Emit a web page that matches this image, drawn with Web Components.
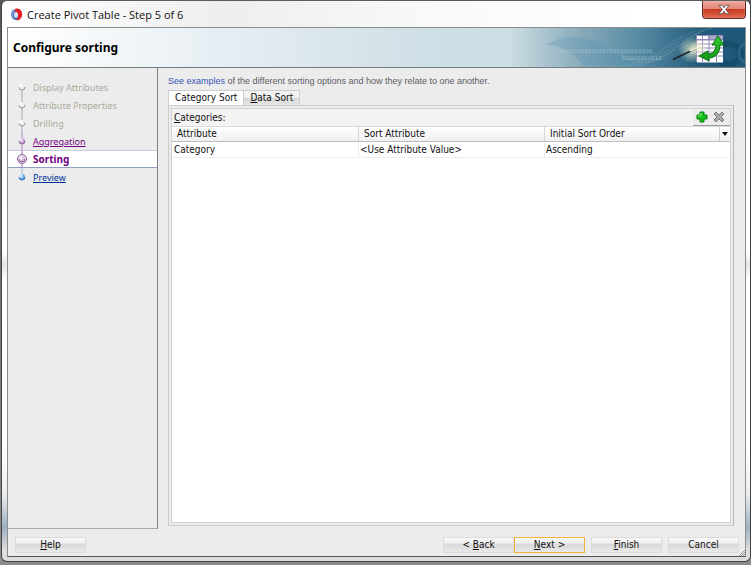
<!DOCTYPE html>
<html lang="en">
<head>
<meta charset="utf-8">
<title>Create Pivot Table - Step 5 of 6</title>
<style>
  body {
    margin: 0;
    min-height: 100vh;
    display: flex;
    background: linear-gradient(#55565a, #77787a 60%, #8c8c8c);
    font-family: "DejaVu Sans Condensed", "Noto Sans", sans-serif;
    font-size: 10px;
    color: #111;
  }
</style>
</head>
<body>

<wizard-window heading="Create Pivot Table - Step 5 of 6">
  <wizard-banner slot="banner">Configure sorting</wizard-banner>
  <wizard-steps slot="steps">
    <wizard-step state="disabled">Display Attributes</wizard-step>
    <wizard-step state="disabled">Attribute Properties</wizard-step>
    <wizard-step state="disabled">Drilling</wizard-step>
    <wizard-step state="visited">Aggregation</wizard-step>
    <wizard-step state="current">Sorting</wizard-step>
    <wizard-step state="next">Preview</wizard-step>
  </wizard-steps>
  <sort-tabs>
    <sort-table></sort-table>
  </sort-tabs>
  <wizard-button slot="help"><u>H</u>elp</wizard-button>
  <wizard-button slot="buttons"><span>&lt; <u>B</u>ack</span></wizard-button>
  <wizard-button slot="buttons" default><span><u>N</u>ext &gt;</span></wizard-button>
  <wizard-button slot="buttons" apart><u>F</u>inish</wizard-button>
  <wizard-button slot="buttons" apart>Cancel</wizard-button>
</wizard-window>

<script>
// Attach a shadow root and fill it from a string
function render(element, html) {
  const root = element.attachShadow({ mode: 'open' });
  const template = document.createElement('template');
  template.innerHTML = html;
  root.append(template.content.cloneNode(true));
  return root;
}

// The window frame: title bar, banner, steps, content and the footer buttons
class WizardWindow extends HTMLElement {
  constructor() {
    super();
    const root = render(this, `
      <style>
        :host {
          flex: 1;
          display: flex;
          flex-direction: column;
          box-sizing: border-box;
          margin: 0 0 3px 1px;
          padding: 0 4px 4px 5px;
          border: 1px solid #444;
          border-top-color: #5c5c5c;
          border-radius: 6px;
          background:
            linear-gradient(90deg, #fff0 1%, #eee 30%, #f8f8f8 55%, #fff0 85%) 0 0 / 100% 26px no-repeat,
            linear-gradient(#fff 0 45%, #e4e6e8 47%, #fff 50% 80%, #eee 88%, #9eb0c2 94%, #ddd 98%);
        }
        header {
          height: 26px;
          display: flex;
          align-items: center;
          gap: 4px;
          padding-left: 3px;
        }
        h1 {
          flex: 1;
          margin: 0;
          font: 11px "Open Sans", sans-serif;
        }
        .close {
          align-self: flex-start;
          width: 44px;
          height: 18px;
          padding: 0;
          border: 1px solid #5f2c28;
          border-top: 0;
          border-radius: 0 0 4px 4px;
          background: linear-gradient(#efaaa0, #df8475 48%, #c93a22 50%, #dd6a50);
          box-shadow: inset 0 0 1px #fff;
        }
        .close svg { display: block; margin: auto; }
        .frame {
          flex: 1;
          display: flex;
          flex-direction: column;
          border: 1px solid #8a8d8e;
          border-bottom-color: #555;
          background: #ececec;
        }
        .body { flex: 1; display: flex; }
        main {
          flex: 1;
          display: flex;
          flex-direction: column;
          padding: 6px 11px 3px 10px;
        }
        footer {
          display: flex;
          justify-content: space-between;
          padding: 8px 6px 3px 7px;
          position: relative;
        }
        .buttons { display: flex; }
        .grip { position: absolute; right: 0; bottom: 0; }
      </style>
      <header>
        <svg width="13" height="13" viewBox="0 0 13 13" aria-hidden="true">
          <ellipse cx="6" cy="7" rx="4" ry="5" fill="#2f65b5"/>
          <path d="M6 1C2 1 1 4 1 6.500C1 9 2 11 4 12C3 8 3 4 6 1Z" fill="#7a9bd0"/>
          <path d="M5 1C10-1 13 4 12 8C11 11 9 13 6 12C9 10 9 5 5 4Z" fill="#e21d25"/>
          <ellipse cx="6" cy="7" rx="2" ry="3" fill="#d8e6f8"/>
        </svg>
        <h1></h1>
        <button class="close" aria-label="Close">
          <svg width="12" height="11" viewBox="0 0 14 12">
            <path d="M1 1H5L7 4L9 1H13L9 6L13 11H9L7 8L5 11H1L5 6Z" fill="#fff" stroke="#60484a"/>
          </svg>
        </button>
      </header>
      <div class="frame">
        <slot name="banner"></slot>
        <div class="body">
          <slot name="steps"></slot>
          <main><slot></slot></main>
        </div>
        <footer>
          <slot name="help"></slot>
          <div class="buttons"><slot name="buttons"></slot></div>
          <svg class="grip" width="7" height="7" aria-hidden="true">
            <path d="M1 7L7 1M3 7L7 3M5 7L7 5" stroke="#9a9a94"/>
          </svg>
        </footer>
      </div>
    `);
    root.querySelector('h1').textContent = this.getAttribute('heading');
  }
}

// Page title over the blue artwork
class WizardBanner extends HTMLElement {
  constructor() {
    super();
    render(this, `
      <style>
        :host {
          display: flex;
          justify-content: space-between;
          align-items: center;
          height: 39px;
          padding-left: 5px;
          border-bottom: 1px solid #737d80;
          background: linear-gradient(90deg, #fff, #e2ebf1 34%, #cedfe5 58%, #cddee4 68%, #86a9b9 78%, #5489a2 86%, #225b7b 94%, #1d5676);
          overflow: hidden;
        }
        h2 {
          margin: 0;
          font: bold 12px "Noto Sans", sans-serif;
          color: #000;
        }
        svg { flex: none; }
      </style>
      <h2><slot></slot></h2>
      <svg width="240" height="39" viewBox="505 28 240 39" aria-hidden="true">
        <defs>
          <pattern id="dots" width="3" height="3" patternUnits="userSpaceOnUse" patternTransform="rotate(-25)">
            <path d="M0 1H2" stroke="#c6dce6" opacity=".3"/>
          </pattern>
          <radialGradient id="glow">
            <stop offset="0" stop-color="#fbf7cf"/>
            <stop offset="1" stop-color="#fbf7cf" stop-opacity="0"/>
          </radialGradient>
          <linearGradient id="leaf" x2="0" y2="1">
            <stop offset="0" stop-color="#36cf32"/>
            <stop offset="1" stop-color="#119417"/>
          </linearGradient>
        </defs>
        <path d="M545 45C575 28 605 42 622 57C632 66 645 68 655 67H585C575 55 562 44 545 45Z" fill="#4b8dae" opacity=".25"/>
        <path d="M555 38C595 30 610 55 640 62C665 66 680 36 712 28" fill="none" stroke="#7fb0c6" opacity=".3"/>
        <path d="M575 62C620 72 650 60 668 44C677 36 690 30 705 29L690 45C670 58 650 66 630 67H590Z" fill="url(#dots)"/>
        <g font-family="Liberation Mono" font-size="6" fill="#b9d2dc" opacity=".6">
          <text x="559" y="53">01010101010101010101010101</text>
          <text x="622" y="60">01010101010</text>
        </g>
        <ellipse cx="728" cy="54" rx="13" ry="10" fill="none" stroke="#144967" stroke-width="6" opacity=".7"/>
        <ellipse cx="745" cy="53" rx="6" ry="9" fill="none" stroke="#39779a" stroke-width="3" opacity=".5"/>
        <ellipse cx="692" cy="50" rx="14" ry="13" fill="url(#glow)" opacity=".8"/>
        <rect x="696" y="35" width="27" height="27" fill="#8f8bb4"/>
        <rect x="697" y="36" width="5" height="3" fill="#fff"/>
        <rect x="703" y="36" width="5" height="3" fill="#fff"/>
        <rect x="709" y="36" width="14" height="3" fill="#aaa6ca"/>
        <path d="M697 42H723M697 46H723M697 50H723M697 54H723M697 58H723M697 61H723" stroke="#fff" stroke-width="3"/>
        <path d="M702.500 35V62M709 35V62M716.500 35V62" stroke="#8f8bb4"/>
        <ellipse cx="698" cy="48" rx="9" ry="8" fill="url(#glow)" opacity=".8"/>
        <path d="M673 59.500L697 48" stroke="#20242a" stroke-width="1.500"/>
        <path d="M690 51L701 46" stroke="#f6f2de" stroke-width="1.500"/>
        <path d="M718 36L724 45H720C720 53 715 58 709 58V61L699 56L708 51V54C713 54 716 50 716 45H712Z"
          fill="url(#leaf)" stroke="#0a6b16"/>
      </svg>
    `);
  }
}

class WizardSteps extends HTMLElement {
  constructor() {
    super();
    render(this, `
      <style>
        :host {
          display: block;
          width: 150px;
          padding-top: 10px;
          box-sizing: border-box;
          border-right: 1px solid #808080;
          border-bottom: 1px solid #aaa;
          font-family: "Noto Sans", sans-serif;
          font-size: 9px;
        }
      </style>
      <nav aria-label="Steps"><slot></slot></nav>
    `);
  }
}

// One step: disabled, visited, current or next
class WizardStep extends HTMLElement {
  constructor() {
    super();
    const state = this.getAttribute('state');
    const colors = {
      disabled: ['#a9a9a9', '#e9e9e9', '#9a9a9a'],
      visited: ['#ae86bd', '#c19bd0', '#8e619f'],
      current: ['#a67cb8', '#d3b9dc', '#8b5d98'],
      next: ['#9ab5dc', '#62a5e8', '#3a6fb6'],
    };
    const [line, fill, edge] = colors[state];
    const last = state === 'next';
    const first = !this.previousElementSibling;
    const tag = state === 'disabled' || state === 'current' ? 'span' : 'a href="#"';
    render(this, `
      <style>
        :host {
          display: flex;
          align-items: center;
          height: 18px;
          padding-left: 8px;
          gap: 5px;
          color: #aaa99a;
        }
        :host([state="current"]) {
          box-sizing: border-box;
          background: #fff;
          border-top: 1px solid #c5cde0;
          border-bottom: 1px solid #8f9fc2;
          color: #700080;
          font-size: 10px;
          font-weight: bold;
        }
        svg { flex: none; overflow: visible; }
        a { color: #700080; }
        :host([state="next"]) a { color: #003399; }
      </style>
      <svg width="12" height="18" viewBox="0 0 12 18" aria-hidden="true">
        <path d="M6 ${first ? 9 : 0}V${last ? 9 : 18}" stroke="${line}"/>
        ${state === 'current' ? `<circle cx="6" cy="9" r="4.500" fill="#eee1f2" stroke="${edge}"/>` : ''}
        <circle cx="6" cy="9" r="3" fill="${fill}"/>
        <path d="M3 9A3 3 0 0 0 9 9" fill="none" stroke="${edge}"/>
        <circle cx="5" cy="8" r="2" fill="#fff" opacity=".7"/>
      </svg>
      <${tag}><slot></slot></${tag.split(' ')[0]}>
    `);
  }
}

// Intro line, the two tabs and the pane below them
class SortTabs extends HTMLElement {
  constructor() {
    super();
    render(this, `
      <style>
        :host { flex: 1; display: flex; flex-direction: column; }
        p {
          margin: 0 0 2px;
          line-height: 14px;
          font-family: "Liberation Sans", Arial, sans-serif;
          font-size: 9px;
          color: #5c5c66;
        }
        p a { color: #3a55b8; text-decoration: none; }
        .tabs { display: flex; }
        .tabs button {
          height: 15px;
          padding: 0 6px;
          border: 1px solid #cfcfcf;
          border-width: 1px 1px 0 0;
          background: linear-gradient(#f3f3f3 45%, #d9d9d9 50%, #e4e4e4);
          font: inherit;
          line-height: 14px;
          color: inherit;
        }
        .tabs [aria-selected="true"] { background: #fff; border-left-width: 1px; }
        .pane {
          flex: 1;
          display: flex;
          padding: 2px;
          border: 1px solid #ccc;
          border-right-color: #b5b5b5;
          background: #ececec;
        }
      </style>
      <p><a href="#">See examples</a> of the different sorting options and how they relate to one another.</p>
      <div class="tabs" role="tablist">
        <button role="tab" aria-selected="true">Category Sort</button>
        <button role="tab" aria-selected="false"><u>D</u>ata Sort</button>
      </div>
      <div class="pane" role="tabpanel"><slot></slot></div>
    `);
  }
}

class SortTable extends HTMLElement {
  constructor() {
    super();
    render(this, `
      <style>
        :host {
          flex: 1;
          border: 1px solid #d2d2d2;
          background: #fff;
        }
        .bar {
          display: flex;
          justify-content: space-between;
          height: 17px;
          padding-left: 2px;
          background: #f3f3f3;
          line-height: 18px;
        }
        .tools {
          display: flex;
          align-items: center;
          gap: 5px;
          padding: 0 5px 0 3px;
          border-bottom: 1px solid #9c9c9c;
          background: #ececec;
        }
        button { padding: 0; border: 0; background: none; }
        svg { display: block; }
        table { width: 100%; table-layout: fixed; border-collapse: separate; border-spacing: 0; }
        th, td {
          height: 14px;
          padding: 0 0 0 5px;
          line-height: 14px;
          font-weight: normal;
          text-align: left;
        }
        th {
          border-top: 1px solid #dadada;
          border-bottom: 1px solid #bdbdbd;
          background: linear-gradient(#fff, #f0f0f0);
        }
        td { height: 15px; padding-left: 2px; border-bottom: 1px solid #eee; }
        th + th { border-left: 1px solid #d5d5d5; }
        td + td { padding-left: 1px; border-left: 1px solid #eee; }
        th div { display: flex; justify-content: space-between; }
        th button {
          width: 11px;
          height: 14px;
          border-left: 1px solid #ccc;
        }
      </style>
      <div class="bar">
        <span id="label"><u>C</u>ategories:</span>
        <div class="tools">
          <button aria-label="Add">
            <svg width="12" height="12" viewBox="0 0 12 12">
              <path d="M4 1H8V4H11V8H8V11H4V8H1V4H4Z" fill="#12c21a" stroke="#078010"/>
              <path d="M5 2V5H2" fill="none" stroke="#7cf07c"/>
            </svg>
          </button>
          <button aria-label="Remove">
            <svg width="12" height="12" viewBox="0 0 12 12">
              <path d="M3 1L6 4L9 1L11 3L8 6L11 9L9 11L6 8L3 11L1 9L4 6L1 3Z" fill="#aaa" stroke="#808080"/>
            </svg>
          </button>
        </div>
      </div>
      <table aria-labelledby="label">
        <thead>
          <tr>
            <th>Attribute</th>
            <th>Sort Attribute</th>
            <th>
              <div>
                Initial Sort Order
                <button aria-label="Choose columns">
                  <svg width="10" height="6" viewBox="0 0 10 6"><path d="M2 1H8L5 5Z" fill="#111"/></svg>
                </button>
              </div>
            </th>
          </tr>
        </thead>
        <tbody>
          <tr>
            <td>Category</td>
            <td>&lt;Use Attribute Value&gt;</td>
            <td>Ascending</td>
          </tr>
        </tbody>
      </table>
    `);
  }
}

class WizardButton extends HTMLElement {
  constructor() {
    super();
    render(this, `
      <style>
        :host { display: block; }
        :host([apart]) { margin-left: 6px; }
        button {
          display: block;
          width: 71px;
          height: 16px;
          padding: 0;
          border: 1px solid #dcdcdc;
          background: linear-gradient(#f8f8f8, #f0f0f0 35%, #d9d9d9 45%, #e9e9e9);
          font: inherit;
          line-height: 14px;
          color: inherit;
        }
        :host([default]) button { border-color: #f2b03c; }
      </style>
      <button><slot></slot></button>
    `);
  }
}

customElements.define('wizard-window', WizardWindow);
customElements.define('wizard-banner', WizardBanner);
customElements.define('wizard-steps', WizardSteps);
customElements.define('wizard-step', WizardStep);
customElements.define('sort-tabs', SortTabs);
customElements.define('sort-table', SortTable);
customElements.define('wizard-button', WizardButton);
</script>
</body>
</html>
